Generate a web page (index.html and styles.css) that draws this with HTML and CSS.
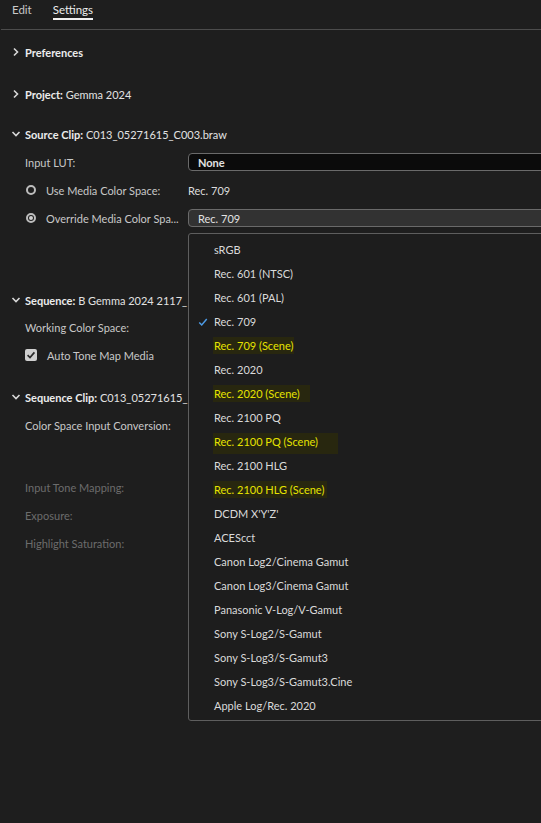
FILE: index.html
```html
<!DOCTYPE html>
<html>
<head>
<meta charset="utf-8">
<link rel="stylesheet" href="styles.css">
</head>
<body>
<div class="app">
  <nav class="tabs">
    <span class="tab">Edit</span>
    <span class="tab tab--active">Settings</span>
  </nav>

  <div class="panel">
    <section class="section">
      <div class="head"><svg class="chev" viewBox="0 0 10 10"><path d="M3 1.5 L6.5 5 L3 8.5"/></svg><b>Preferences</b></div>
    </section>

    <section class="section section--proj">
      <div class="head"><svg class="chev" viewBox="0 0 10 10"><path d="M3 1.5 L6.5 5 L3 8.5"/></svg><b>Project:</b>&nbsp;Gemma 2024</div>
    </section>

    <section class="section section--src">
      <div class="head"><svg class="chev chev--down" viewBox="0 0 10 10"><path d="M1.5 3 L5 6.5 L8.5 3"/></svg><b>Source Clip:</b>&nbsp;C013_05271615_C003.braw</div>
      <div class="row">
        <span class="label">Input LUT:</span>
        <div class="select select--dark"><span>None</span></div>
      </div>
      <div class="row row--radio">
        <span class="radio"></span>
        <span class="label label--radio">Use Media Color Space:</span>
        <span class="value">Rec. 709</span>
      </div>
      <div class="row row--radio">
        <span class="radio radio--on"></span>
        <span class="label label--radio">Override Media Color Spa...</span>
        <div class="select select--mid"><span class="sel-plain">Rec. 709</span></div>
      </div>
    </section>

    <section class="section section--seq">
      <div class="head"><svg class="chev chev--down" viewBox="0 0 10 10"><path d="M1.5 3 L5 6.5 L8.5 3"/></svg><span class="head-text"><b>Sequence:</b>&nbsp;B Gemma 2024 2117_</span></div>
      <div class="row"><span class="label">Working Color Space:</span></div>
      <div class="row row--radio">
        <span class="check"><svg viewBox="0 0 12 12"><path d="M2.6 6.2 L5 8.6 L9.4 3.4"/></svg></span>
        <span class="label label--radio">Auto Tone Map Media</span>
      </div>
    </section>

    <section class="section section--clip">
      <div class="head"><svg class="chev chev--down" viewBox="0 0 10 10"><path d="M1.5 3 L5 6.5 L8.5 3"/></svg><span class="head-text"><b>Sequence Clip:</b>&nbsp;C013_05271615_</span></div>
      <div class="row"><span class="label">Color Space Input Conversion:</span></div>
      <div class="row row--dim row--gap"><span class="label">Input Tone Mapping:</span></div>
      <div class="row row--dim"><span class="label">Exposure:</span></div>
      <div class="row row--dim"><span class="label">Highlight Saturation:</span></div>
    </section>
  </div>

  <ul class="menu">
    <li class="item">sRGB</li>
    <li class="item">Rec. 601 (NTSC)</li>
    <li class="item">Rec. 601 (PAL)</li>
    <li class="item item--checked"><svg class="tick" viewBox="0 0 12 12"><path d="M1.5 6.5 L4.5 9.5 L10.5 2.5"/></svg>Rec. 709</li>
    <li class="item"><span class="hl hl--a">Rec. 709 (Scene)</span></li>
    <li class="item">Rec. 2020</li>
    <li class="item"><span class="hl hl--b">Rec. 2020 (Scene)</span></li>
    <li class="item">Rec. 2100 PQ</li>
    <li class="item"><span class="hl hl--c">Rec. 2100 PQ (Scene)</span></li>
    <li class="item">Rec. 2100 HLG</li>
    <li class="item"><span class="hl hl--d">Rec. 2100 HLG (Scene)</span></li>
    <li class="item">DCDM X'Y'Z'</li>
    <li class="item">ACEScct</li>
    <li class="item">Canon Log2/Cinema Gamut</li>
    <li class="item">Canon Log3/Cinema Gamut</li>
    <li class="item">Panasonic V-Log/V-Gamut</li>
    <li class="item">Sony S-Log2/S-Gamut</li>
    <li class="item">Sony S-Log3/S-Gamut3</li>
    <li class="item">Sony S-Log3/S-Gamut3.Cine</li>
    <li class="item">Apple Log/Rec. 2020</li>
  </ul>
</div>
</body>
</html>
```

FILE: styles.css
```css
* { box-sizing: border-box; }
html, body {
  margin: 0;
  padding: 0;
  background: #1e1e1e;
  overflow: hidden;
}
body {
  width: 541px;
  height: 823px;
  font-family: Lato, "Noto Sans", sans-serif;
  font-size: 11px;
  color: #d2d2d2;
}
.app {
  position: relative;
  width: 541px;
  height: 823px;
  overflow: hidden;
}
.tabs {
  display: flex;
  height: 30px;
  border-bottom: 1px solid #4c4c4c;
  padding-left: 11px;
  gap: 21px;
  margin-left: 1px;
  font-size: 11.5px;
}
.tab {
  display: block;
  height: 20px;
  line-height: 20px;
  color: #c9c9c9;
}
.tab--active {
  color: #ececec;
  border-bottom: 2px solid #f0f0f0;
}
.panel {
  padding-top: 9px;
}
.section {
  margin-top: 13px;
}
.section:first-child { margin-top: 0; }
.section--proj { margin-top: 16px; }
.section--src { margin-top: 14px; }
.section--seq { margin-top: 55px; }
.section--clip { margin-top: 15px; }
.head {
  display: flex;
  align-items: center;
  height: 26px;
  padding-left: 11px;
  color: #e2e2e2;
  white-space: nowrap;
}
.head b { font-weight: 700; color: #ececec; }
.head-text {
  display: block;
}
.chev {
  width: 10px;
  height: 10px;
  margin-right: 4px;
  flex: none;
  fill: none;
  stroke: #d8d8d8;
  stroke-width: 1.6;
}
.row {
  display: flex;
  align-items: center;
  height: 28px;
  padding-left: 25px;
  white-space: nowrap;
}
.row--radio { padding-left: 26px; }
.section--src .row:nth-child(2),
.section--clip .row:nth-child(2) { margin-top: 1px; }
.row--gap { margin-top: 34px; }
.label {
  width: 163px;
  flex: none;
  color: #c8c8c8;
}
.row--dim .label { color: #6c6c6c; }
.label--radio { width: 142px; }
.radio {
  width: 10px;
  height: 10px;
  border: 2px solid #bdbdbd;
  border-radius: 50%;
  margin-right: 10px;
  flex: none;
  position: relative;
}
.radio--on::after {
  content: "";
  position: absolute;
  left: 1px;
  top: 1px;
  width: 4px;
  height: 4px;
  border-radius: 50%;
  background: #d0d0d0;
}
.check {
  width: 12px;
  height: 12px;
  margin-left: -1px;
  margin-right: 10px;
  border-radius: 2px;
  background: #cfcfcf;
  flex: none;
  display: flex;
}
.check svg {
  width: 12px;
  height: 12px;
  fill: none;
  stroke: #2a2a2a;
  stroke-width: 1.7;
}
.value { color: #dcdcdc; }
.select {
  flex: 1;
  height: 18px;
  margin-right: -20px;
  border: 1px solid #6a6a6a;
  border-radius: 4px;
  padding-left: 9px;
  display: flex;
  align-items: center;
  color: #e2e2e2;
}
.select--dark { background: #0b0b0b; font-weight: 700; }
.select--mid { background: #323232; }
.menu {
  position: absolute;
  left: 188px;
  top: 233px;
  width: 380px;
  height: 488px;
  margin: 0;
  padding: 4px 0 0 0;
  list-style: none;
  background: #1d1d1d;
  border: 1px solid #5e5e5e;
  border-radius: 3px;
}
.item {
  position: relative;
  height: 24px;
  line-height: 24px;
  padding-left: 25px;
  color: #dadada;
  white-space: nowrap;
}
.tick {
  position: absolute;
  left: 9px;
  top: 7px;
  width: 10px;
  height: 10px;
  fill: none;
  stroke: #4d9be6;
  stroke-width: 1.8;
}
.hl {
  color: #e6e300;
  background: #28270f;
  padding: 2px 1px 2px 1px;
  margin-left: -1px;
}
.hl--b { padding-right: 10px; }
.hl--c { padding-right: 20px; padding-bottom: 6px; }
.hl--d { padding-right: 3px; }
```
